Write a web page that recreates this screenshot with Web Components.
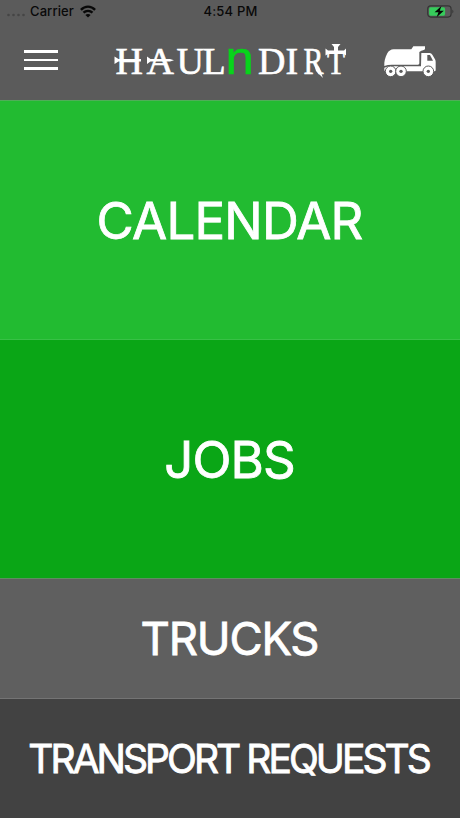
<!DOCTYPE html>
<html lang="en">
<head>
<meta charset="utf-8">
<title>Haul N Dirt</title>
<style>
  html, body {
    margin: 0;
    height: 100%;
    background: #5b5b5b;
    font-family: Inter, "Liberation Sans", sans-serif;
  }
</style>
</head>
<body>
<haul-app></haul-app>

<script>
// ----- Status bar -----
class StatusBar extends HTMLElement {
  constructor() {
    super();
    this.attachShadow({ mode: "open" }).innerHTML = `
      <style>
        :host {
          display: grid;
          grid-template-columns: 1fr auto 1fr;
          align-items: center;
          height: 23px;
          padding: 0 5px 0 6px;
          color: #090909;
          font-size: 13px;
          font-weight: 500;
          line-height: 23px;
        }
        .left { display: flex; align-items: center; }
        .dots { display: block; margin: 7px 4px 0 0; }
        .wifi { display: block; margin-left: 6px; }
        .carrier { letter-spacing: 0.1px; }
        .time { letter-spacing: 0.2px; }
        .battery { display: block; justify-self: end; }
      </style>
      <div class="left">
        <svg class="dots" width="20" height="4" viewBox="0 0 20 4" fill="#454545">
          <circle cx="2.5" cy="2" r="1.3"/><circle cx="7.5" cy="2" r="1.3"/>
          <circle cx="12.5" cy="2" r="1.3"/><circle cx="17.5" cy="2" r="1.3"/>
        </svg>
        <span class="carrier"><slot name="carrier"></slot></span>
        <svg class="wifi" width="16" height="13" viewBox="0 0 16 13" fill="none" stroke="#090909" stroke-width="2.4">
          <path d="M0.9 4.8 C5 .6 11 .6 15.1 4.8"/>
          <path d="M3.5 7.7 C6 5.2 10 5.2 12.5 7.7"/>
          <path d="M8 12.6 L5.4 9.9 C6.9 8.6 9.1 8.6 10.6 9.9 Z" fill="#090909" stroke="none"/>
        </svg>
      </div>
      <span class="time"><slot name="time"></slot></span>
      <svg class="battery" width="28" height="13" viewBox="0 0 28 13">
        <rect x=".7" y=".9" width="23.4" height="11.2" rx="3" fill="none" stroke="#343434" stroke-width="1.1"/>
        <path d="M25.4 4.5 Q27.3 6.5 25.4 8.5 Z" fill="#343434"/>
        <rect x="2.1" y="2.3" width="16" height="8.4" rx="1.6" fill="#36cc5b"/>
        <path d="M14.4 1 L7.6 7.2 H11.5 L9.6 12.2 L16.8 5.8 H12.8 Z" fill="#050505"/>
      </svg>
    `;
  }
}

// ----- Menu button -----
class MenuButton extends HTMLElement {
  constructor() {
    super();
    this.attachShadow({ mode: "open" }).innerHTML = `
      <style>
        :host { display: block; width: 34px; }
        button {
          display: flex;
          flex-direction: column;
          gap: 6px;
          width: 34px;
          padding: 0;
          border: 0;
          background: none;
          cursor: pointer;
        }
        i { display: block; width: 34px; height: 2.5px; background: #fff; }
      </style>
      <button aria-label="Menu"><i></i><i></i><i></i></button>
    `;
  }
}

// ----- Wordmark -----
class HaulLogo extends HTMLElement {
  constructor() {
    super();
    this.attachShadow({ mode: "open" }).innerHTML = `
      <style>
        :host { display: block; width: 240px; height: 60px; }
        svg { display: block; }
        text { font-family: "Liberation Serif", serif; font-size: 38px; fill: #fff; stroke: #fff; stroke-width: .6px; }
        .n { font-family: "Liberation Sans", sans-serif; font-size: 47px; fill: #08d41b; stroke: #08d41b; }
        .r { font-size: 37px; }
        .t { font-size: 34px; }
      </style>
      <svg width="240" height="60" viewBox="0 0 240 60">
        <text y="43.5" x="5.5 36.5 66.5 92.5">HAUL</text>
        <text class="n" transform="translate(115.5 43.5) scale(1.08 1)">n</text>
        <text y="43.5" x="148 175.5">DI</text>
        <text class="r" y="43.5" x="193.5" textLength="20" lengthAdjust="spacingAndGlyphs">R</text>
        <text class="t" y="43.5" x="217" textLength="18" lengthAdjust="spacingAndGlyphs">T</text>
        <!-- barbs on the crossbars, tail of the R and top of the cross -->
        <g fill="#fff">
          <path d="M4.5 26.5 L8.5 29 H31 V31.5 H8.5 L4.5 34 Z"/>
          <path d="M37 26.5 L40.5 29 H60 L64 30.2 L60 31.5 H40.5 L37 34 Z"/>
          <path d="M204 33 L209 37 L213 48 L206 41 Z"/>
          <path d="M221.5 14 H230.5 L228 17 V24 H224 V17 Z"/>
          <path d="M215.5 18.5 L218 20.5 H234 L236 18.5 V25.5 L234 24 H218 L215.5 25.5 Z"/>
        </g>
      </svg>
    `;
  }
}

// ----- Dump truck -----
class TruckIcon extends HTMLElement {
  constructor() {
    super();
    this.attachShadow({ mode: "open" }).innerHTML = `
      <style>
        :host { display: block; width: 52px; height: 31px; }
        svg { display: block; }
      </style>
      <svg width="52" height="31" viewBox="27 32 156 93">
        <path fill="#fff" d="M28 92 C27 80 30 67 37 54 Q43 43 56 42 H109 L115 33 H150 V42 Q148 45 139 46 L133 50 V84 Q133 88 129 88 H51 Q38 88 28 92 Z"/>
        <path fill="#fff" d="M139 53 H164 Q169 53 172 58 L180 72 Q182 75 182 80 V104 Q182 108 178 108 H32 Q28 108 28 103 V97 Q38 93 51 93 H138 Z"/>
        <path fill="#5b5b5b" d="M157 59 H165 L174 76 H157 Z"/>
        <g fill="#fff" stroke="#5b5b5b" stroke-width="3">
          <circle cx="47" cy="108" r="16"/>
          <circle cx="78" cy="108" r="16"/>
          <circle cx="160" cy="108" r="16"/>
        </g>
        <g fill="#5b5b5b">
          <circle cx="47" cy="108" r="5"/>
          <circle cx="78" cy="108" r="5"/>
          <circle cx="160" cy="108" r="5"/>
        </g>
      </svg>
    `;
  }
}

// ----- Header -----
class AppHeader extends HTMLElement {
  constructor() {
    super();
    this.attachShadow({ mode: "open" }).innerHTML = `
      <style>
        :host { display: flex; flex-direction: column; height: 100px; background: #5b5b5b; }
        .bar {
          display: flex;
          align-items: center;
          height: 74px;
          padding: 0 24px;
        }
        haul-logo { margin-left: 52px; }
        truck-icon { margin: 2px 0 0 auto; }
      </style>
      <status-bar>
        <span slot="carrier">Carrier</span>
        <span slot="time">4:54 PM</span>
      </status-bar>
      <div class="bar">
        <menu-button></menu-button>
        <haul-logo></haul-logo>
        <truck-icon></truck-icon>
      </div>
    `;
  }
}

// ----- Menu tile -----
class MenuTile extends HTMLElement {
  constructor() {
    super();
    this.attachShadow({ mode: "open" }).innerHTML = `
      <style>
        :host {
          display: flex;
          align-items: center;
          justify-content: center;
          box-sizing: border-box;
          min-height: 0;
          border-top: 1px solid var(--line);
          background: var(--tile);
          color: #fff;
          font-size: var(--size);
          font-weight: 400;
          -webkit-text-stroke: 0.8px #fff;
          line-height: 1;
          letter-spacing: var(--track, 0px);
          white-space: nowrap;
          cursor: pointer;
        }
        /* evens out the negative tracking after the last letter */
        span { padding-right: calc(var(--track, 0px) * -1); }
      </style>
      <span><slot></slot></span>
    `;
  }
}

// ----- App -----
class HaulApp extends HTMLElement {
  constructor() {
    super();
    this.attachShadow({ mode: "open" }).innerHTML = `
      <style>
        :host { display: grid; grid-template-rows: 100px 239fr 239fr 120fr 120fr; height: 100vh; }
        .calendar { --tile: #22bb31; --line: #4fae58; --size: 51px; --track: -0.8px; }
        .jobs { --tile: #0aa616; --line: #38c146; --size: 51px; --track: -0.9px; }
        .trucks { --tile: #5f5f5f; --line: #5f8d62; --size: 45.5px; --track: -1.2px; }
        .requests { --tile: #424242; --line: #747474; --size: 39px; --track: -2.95px; }
      </style>
      <app-header></app-header>
      <menu-tile class="calendar">CALENDAR</menu-tile>
      <menu-tile class="jobs">JOBS</menu-tile>
      <menu-tile class="trucks">TRUCKS</menu-tile>
      <menu-tile class="requests">TRANSPORT REQUESTS</menu-tile>
    `;
  }
}

customElements.define("status-bar", StatusBar);
customElements.define("menu-button", MenuButton);
customElements.define("haul-logo", HaulLogo);
customElements.define("truck-icon", TruckIcon);
customElements.define("app-header", AppHeader);
customElements.define("menu-tile", MenuTile);
customElements.define("haul-app", HaulApp);
</script>
</body>
</html>
